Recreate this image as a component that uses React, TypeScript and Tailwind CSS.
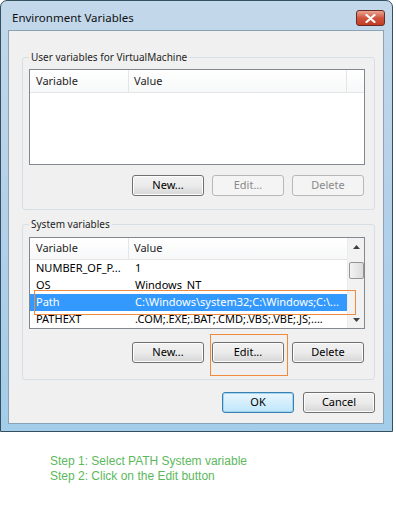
import React from "react";

type BtnProps = { label: string; disabled?: boolean; primary?: boolean };

function WinButton({ label, disabled, primary }: BtnProps) {
  if (disabled) {
    return (
      <div className="w-[72px] h-[21px] flex items-center justify-center rounded-[3px] border border-[#b5b9bc] bg-[#f4f4f4] text-[#8a8a8a]">
        {label}
      </div>
    );
  }
  return (
    <div
      className={
        primary
          ? "w-[72px] h-[21px] flex items-center justify-center rounded-[3px] border border-[#3c7fb1] bg-gradient-to-b from-[#eaf6fd] to-[#bee6fd] shadow-[inset_0_0_0_1px_#9fd5f3] text-black"
          : "w-[72px] h-[21px] flex items-center justify-center rounded-[3px] border border-[#707070] bg-gradient-to-b from-[#f2f2f2] via-[#ebebeb] to-[#d6d6d6] shadow-[inset_0_0_0_1px_#fcfcfc] text-black"
      }
    >
      {label}
    </div>
  );
}

function Header({ extraCol }: { extraCol?: boolean }) {
  return (
    <div className="flex h-[23px] items-center bg-gradient-to-b from-white to-[#f7f8f9] border-b border-[#e5e5e5] text-[#1e1e1e]">
      <div className="w-[99px] pl-[6px] h-full flex items-center border-r border-[#e5e5e5]">Variable</div>
      <div className="flex-1 pl-[5px] h-full flex items-center">Value</div>
      {extraCol && <div className="w-[18px] h-full border-l border-[#e5e5e5]" />}
    </div>
  );
}

const rows = [
  ["NUMBER_OF_P...", "1"],
  ["OS", "Windows_NT"],
  ["Path", "C:\\Windows\\system32;C:\\Windows;C:\\..."],
  ["PATHEXT", ".COM;.EXE;.BAT;.CMD;.VBS;.VBE;.JS;...."],
];

export default function App() {
  return (
    <div
      className="w-[396px] h-[512px] bg-white text-[11px] text-black"
      style={{ fontFamily: '"Noto Sans", "Open Sans", sans-serif' }}
    >
      {/* window frame */}
      <div className="w-[393px] h-[432px] flex flex-col rounded-t-[7px] border border-[#34505f] bg-gradient-to-b from-[#c3d8ea] via-[#b3d0e9] to-[#a3cde9]">
        <div className="h-[29px] flex items-center justify-between pl-[11px] pr-[7px]">
          <span className="text-[11.5px] text-[#101010] mt-[5px]">Environment Variables</span>
          <div className="w-[29px] h-[16px] mt-[5px] rounded-[3px] border border-[#6b2b22] bg-gradient-to-b from-[#e8a493] via-[#d0543e] to-[#c23d25] flex items-center justify-center">
            <svg width="11" height="9" viewBox="0 0 11 9">
              <path d="M1.5 1 L9.5 8 M9.5 1 L1.5 8" stroke="white" strokeWidth="2.2" strokeLinecap="round" />
            </svg>
          </div>
        </div>

        {/* client area */}
        <div className="ml-[7px] mr-[8px] h-[394px] bg-[#f0f0f0] border border-[#8ba2b5] flex flex-col pl-[13px] pr-[8px] pt-[19px]">
          <fieldset className="min-w-0 border border-[#d5dfe5] rounded-[3px] h-[160px] pl-[6px] pr-[9px]">
            <legend className="px-[2px] text-[10px] text-[#1e1e1e]">User variables for VirtualMachine</legend>
            <div className="h-[96px] mt-[4px] bg-white border border-[#828790]">
              <Header extraCol />
            </div>
            <div className="flex justify-end gap-[8px] mt-[10px] pr-[1px]">
              <WinButton label="New..." />
              <WinButton label="Edit..." disabled />
              <WinButton label="Delete" disabled />
            </div>
          </fieldset>

          <fieldset className="min-w-0 border border-[#d5dfe5] rounded-[3px] h-[163px] mt-[7px] pl-[6px] pr-[9px]">
            <legend className="px-[2px] text-[10px] text-[#1e1e1e]">System variables</legend>
            <div className="h-[92px] mt-[5px] bg-white border border-[#828790] flex overflow-hidden">
              <div className="flex-1 min-w-0 flex flex-col">
                <Header />
                <div className="relative">
                  {rows.map(([k, v]) => (
                    <div
                      key={k}
                      className={
                        k === "Path"
                          ? "flex h-[17px] items-center bg-[#3399ff] text-white"
                          : "flex h-[17px] items-center"
                      }
                    >
                      <div className="w-[99px] shrink-0 pl-[6px] whitespace-nowrap">{k}</div>
                      <div className="flex-1 min-w-0 pl-[6px] whitespace-nowrap overflow-hidden">{v}</div>
                    </div>
                  ))}
                  <div className="absolute left-[4px] right-[-9px] top-[30px] h-[25px] border border-[#f08a3c]" />
                </div>
              </div>
              <div className="w-[17px] shrink-0 bg-[#f2f2f2] border-l border-[#ececec] flex flex-col items-center">
                <div className="h-[17px] flex items-center justify-center">
                  <svg width="7" height="4" viewBox="0 0 7 4"><path d="M0 4 L3.5 0 L7 4 Z" fill="#404040" /></svg>
                </div>
                <div className="w-[15px] h-[17px] mt-[7px] rounded-[2px] border border-[#959595] bg-gradient-to-r from-[#f3f3f3] to-[#dcdcdc]" />
                <div className="flex-1" />
                <div className="h-[17px] flex items-center justify-center">
                  <svg width="7" height="4" viewBox="0 0 7 4"><path d="M0 0 L7 0 L3.5 4 Z" fill="#404040" /></svg>
                </div>
              </div>
            </div>
            <div className="flex justify-end gap-[8px] mt-[13px] pr-[1px]">
              <WinButton label="New..." />
              <div className="relative">
                <WinButton label="Edit..." />
                <div className="absolute left-[-2px] top-[-8px] w-[78px] h-[42px] border border-[#f08a3c]" />
              </div>
              <WinButton label="Delete" />
            </div>
          </fieldset>

          <div className="flex justify-end gap-[9px] mt-[12px]">
            <WinButton label="OK" primary />
            <WinButton label="Cancel" />
          </div>
        </div>
      </div>

      <div className="pl-[50px] pt-[22px] text-[12px] leading-[15px] text-[#5cb85c]" style={{ fontFamily: '"Liberation Sans", Arial, sans-serif' }}>
        <div>Step 1: Select PATH System variable</div>
        <div>Step 2: Click on the Edit button</div>
      </div>
    </div>
  );
}
